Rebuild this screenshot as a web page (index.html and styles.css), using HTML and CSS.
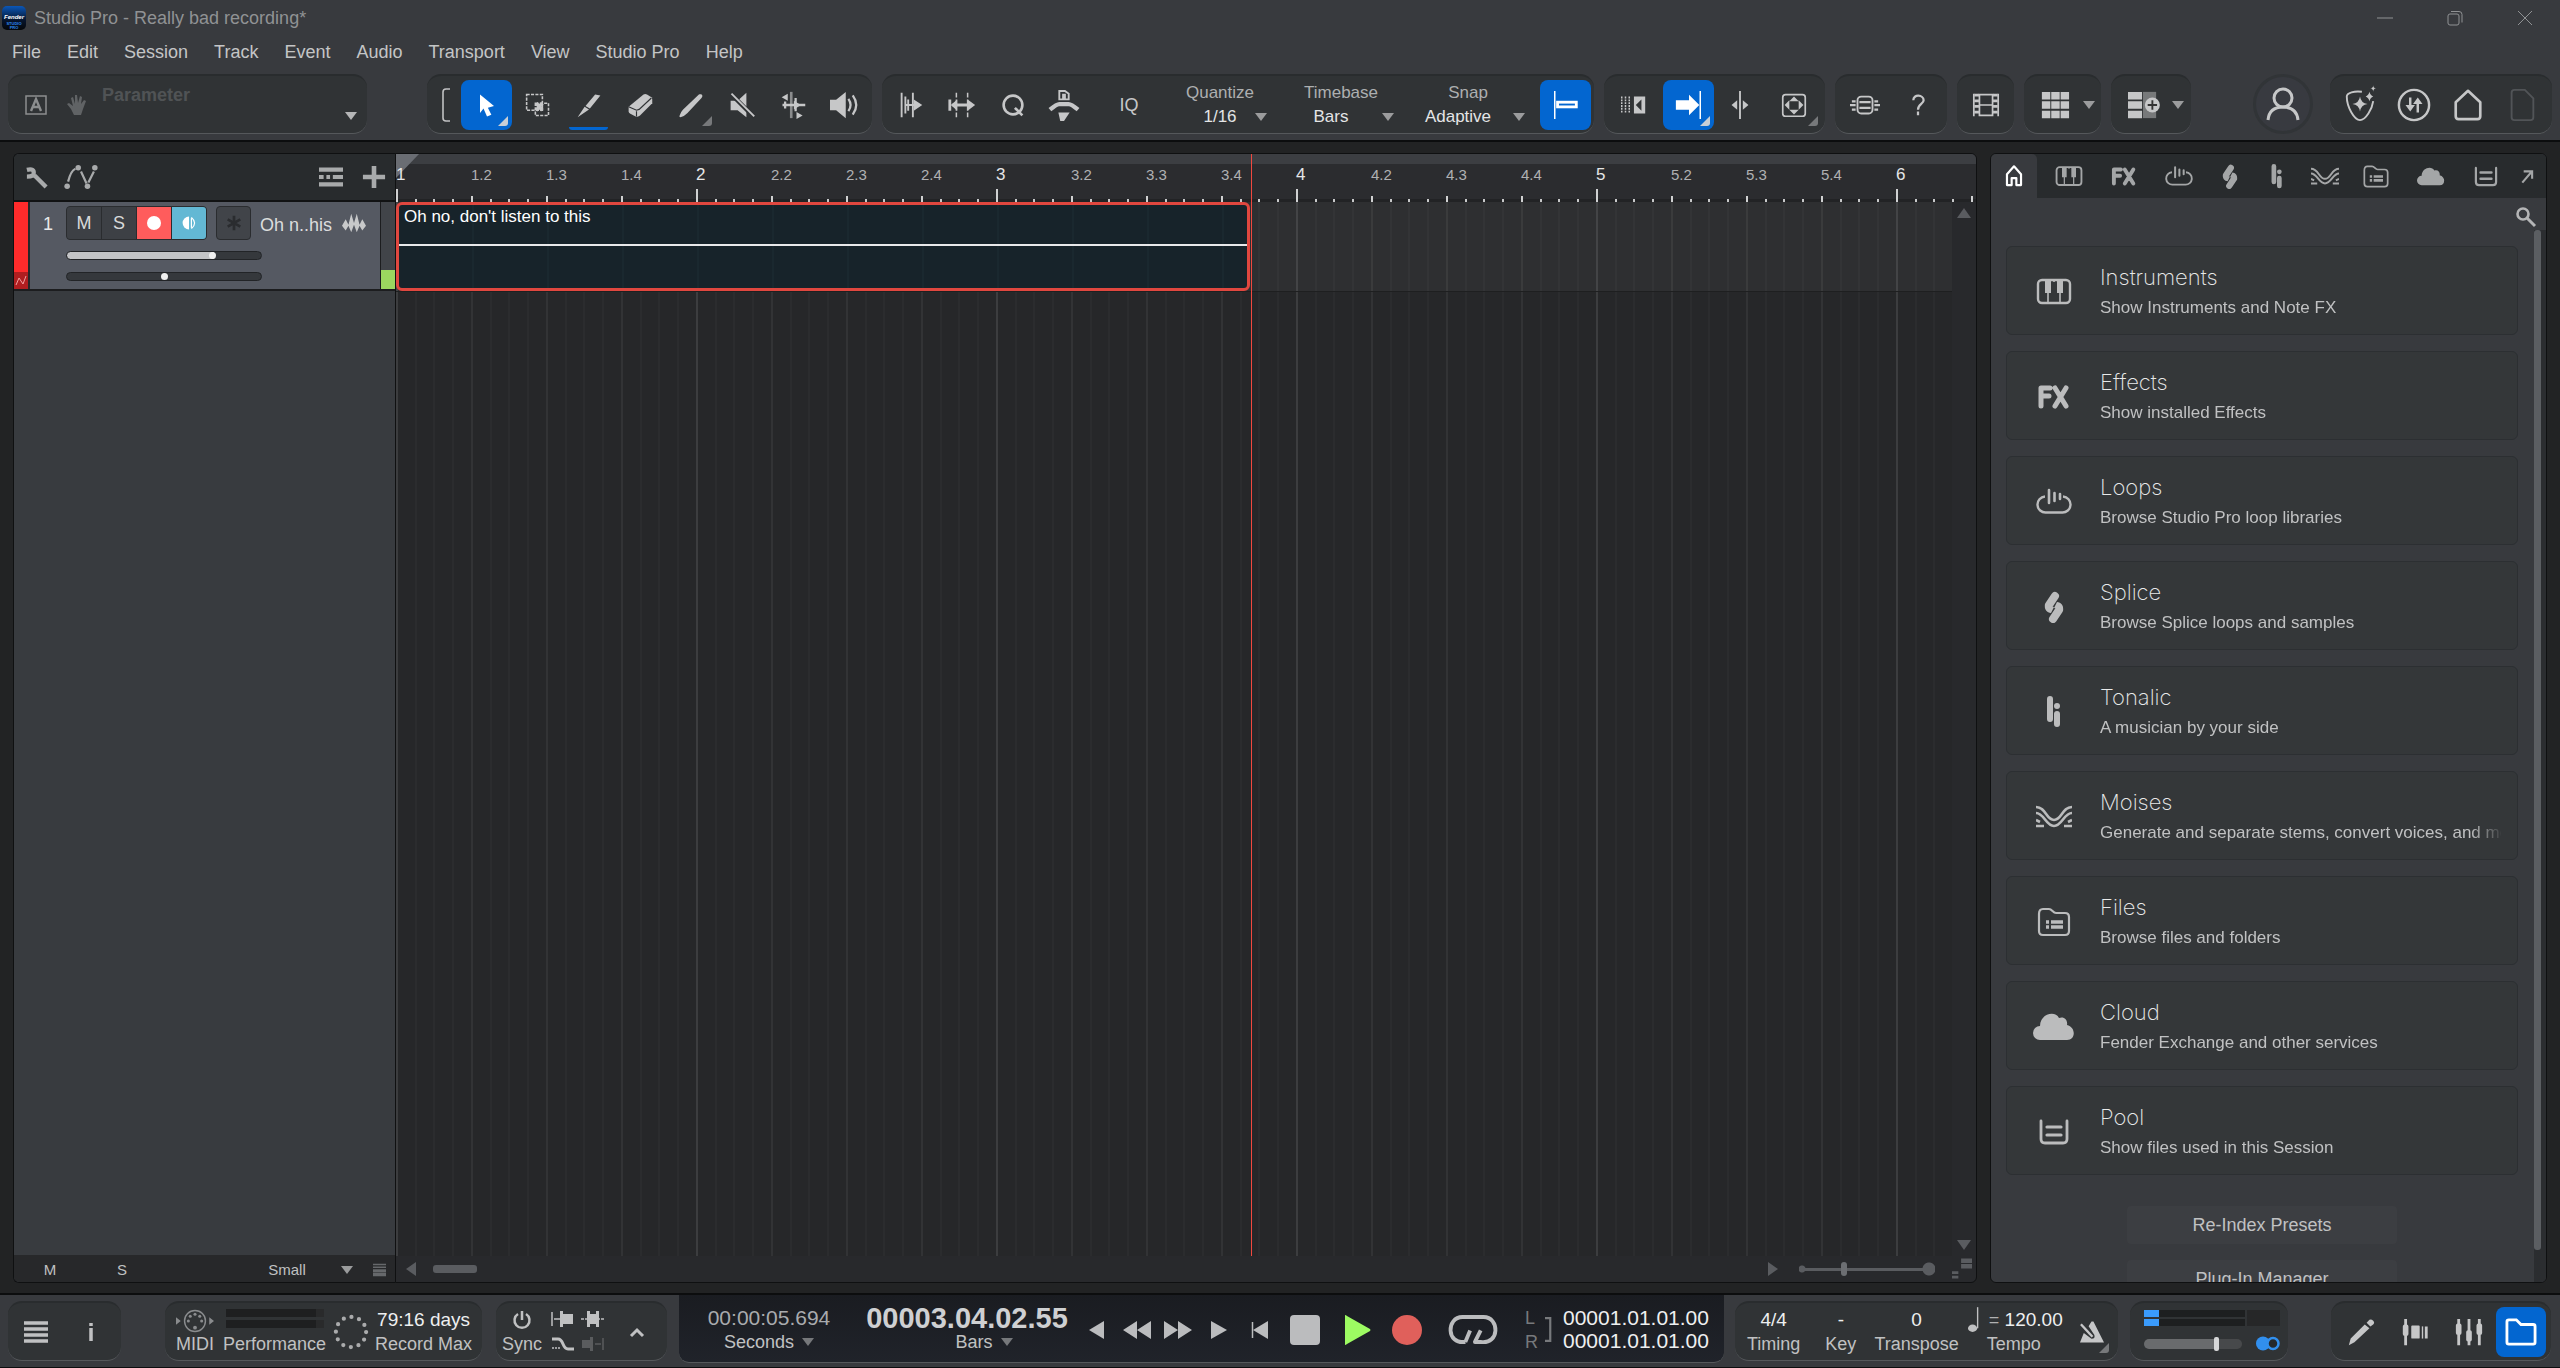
FILE: index.html
```html
<!DOCTYPE html>
<html lang="en">
<head>
  <meta charset="UTF-8">
  <title>Studio Pro - Really bad recording*</title>
  <link rel="stylesheet" href="styles.css">
</head>
<body>

  <!-- icon sprite -->
  <svg class="sprite" width="0" height="0">
    <symbol id="i-home" viewBox="0 0 32 32"><path d="M7 27V13l9-10 9 10v14h-6v-9h-6v9z" fill="none" stroke="currentColor" stroke-width="2.8" stroke-linejoin="round"/></symbol>
    <symbol id="i-keys" viewBox="0 0 36 32"><rect x="2" y="4" width="32" height="23" rx="4" fill="none" stroke="currentColor" stroke-width="2.4"/><path d="M9 4h6v13H9zM21 4h6v13h-6z" fill="currentColor"/><path d="M12 16v11M24 16v11M18 4v2" stroke="currentColor" stroke-width="1.6"/></symbol>
    <symbol id="i-fx" viewBox="0 0 36 32"><path d="M5 25V7h9M5 15h8M19 7l11 18M30 7L19 25" fill="none" stroke="currentColor" stroke-width="5" stroke-linecap="round" stroke-linejoin="round"/></symbol>
    <symbol id="i-loop" viewBox="0 0 36 32"><path d="M9 10.500a8 8 0 0 0 1 16h16a8 8 0 0 0 1-16" fill="none" stroke="currentColor" stroke-width="2.400"/><path d="M13 4v13M18.500 7v8M24 8v5" stroke="currentColor" stroke-width="2.600" stroke-linecap="round"/></symbol>
    <symbol id="i-splice" viewBox="0 0 32 32"><path d="M11 14l6-9M15 28l6-9" stroke="currentColor" stroke-width="8" stroke-linecap="round"/><path d="M7 14c-1 4 2 8 6 8l3-6zM25 19c1-4-2-8-6-8l-3 6z" fill="currentColor"/></symbol>
    <symbol id="i-tonalic" viewBox="0 0 32 32"><path d="M12 3v20M19 18v10" stroke="currentColor" stroke-width="6" stroke-linecap="round"/><circle cx="19" cy="10" r="3" fill="currentColor"/></symbol>
    <symbol id="i-moises" viewBox="0 0 36 32"><path d="M0 6c10 0 10 13 18 13S26 6 36 6M0 12c8 0 10 13 18 13s10-13 18-13M0 19l4 2M32 21l4-2M0 25h8M28 25h8" fill="none" stroke="currentColor" stroke-width="2.600"/></symbol>
    <symbol id="i-files" viewBox="0 0 36 32"><path d="M3 8c0-3 1-5 4-5h6c3 0 4 4 7 4h9c3 0 4 2 4 4v14c0 3-1 4-4 4H7c-3 0-4-1-4-4z" fill="none" stroke="currentColor" stroke-width="2.200"/><path d="M10 16h3M15 16h12M10 21h3M15 21h12" stroke="currentColor" stroke-width="3.400"/></symbol>
    <symbol id="i-cloud" viewBox="0 0 42 32"><path d="M7 29a7 7 0 0 1 0-14C7 3 22-1 26 7c5-2 9 2 8 7 9 2 9 15 0 15z" fill="currentColor"/></symbol>
    <symbol id="i-pool" viewBox="0 0 36 32"><path d="M5 5v18q0 4 4 4h18q4 0 4-4V5" fill="none" stroke="currentColor" stroke-width="2.800" stroke-linecap="round"/><path d="M11 11h14M11 19h14" stroke="currentColor" stroke-width="3.200" stroke-linecap="round"/></symbol>
    <symbol id="i-down" viewBox="0 0 12 10"><path d="M0 1h12L6 9z" fill="currentColor"/></symbol>
    <symbol id="i-corner" viewBox="0 0 12 12"><path d="M11 1v7a3 3 0 0 1-3 3H1z" fill="currentColor"/></symbol>
  </svg>

  <div class="titlebar">
    <svg class="app-icon" viewBox="0 0 24 24">
      <defs><linearGradient id="app" x2="0" y2="1"><stop offset="0" stop-color="#0b57b8"/><stop offset=".6" stop-color="#06142c"/><stop offset="1" stop-color="#050608"/></linearGradient></defs>
      <rect width="24" height="24" rx="5" fill="url(#app)"/>
      <text x="12" y="13" class="app-name">Fender</text>
      <text x="12" y="19" class="app-sub">STUDIO</text>
      <text x="12" y="23" class="app-sub">PRO</text>
    </svg>
    <span class="title">Studio Pro - Really bad recording*</span>
    <div class="window-buttons">
      <button aria-label="Minimize"><svg viewBox="0 0 16 16"><path d="M0 8h16" stroke="currentColor"/></svg></button>
      <button aria-label="Restore"><svg viewBox="0 0 16 16"><rect x="1" y="4" width="11" height="11" rx="2" fill="none" stroke="currentColor"/><path d="M4 1.500h8q3 0 3 3v8" fill="none" stroke="currentColor"/></svg></button>
      <button aria-label="Close"><svg viewBox="0 0 16 16"><path d="M1 1l14 14M15 1L1 15" stroke="currentColor"/></svg></button>
    </div>
  </div>

  <nav class="menubar">
    <a href="#">File</a>
    <a href="#">Edit</a>
    <a href="#">Session</a>
    <a href="#">Track</a>
    <a href="#">Event</a>
    <a href="#">Audio</a>
    <a href="#">Transport</a>
    <a href="#">View</a>
    <a href="#">Studio Pro</a>
    <a href="#">Help</a>
  </nav>

  <div class="toolbar">
    <div class="group param">
      <svg class="param-a" viewBox="0 0 22 20"><rect x="1" y="1" width="20" height="18" fill="none" stroke="currentColor" stroke-width="1.500"/><path d="M6 16l5-12 5 12M8 12h6" fill="none" stroke="currentColor" stroke-width="2.400"/></svg>
      <svg class="param-hand" viewBox="0 0 22 22"><path d="M7 21l-3-6-4-5 2-1 4 3-2-8 2-1 2 7V1h2l1 8 2-7 2 1-1 7 3-4 2 1-3 8-2 6z" fill="currentColor"/></svg>
      <span class="param-name">Parameter</span>
      <button class="param-menu" aria-label="Parameter list"><svg class="arrow" viewBox="0 0 12 10"><use href="#i-down"/></svg></button>
    </div>

    <div class="group tools">
      <svg class="bracket" viewBox="0 0 16 36"><path d="M13 2H9q-3 0-3 3v26q0 3 3 3h4" fill="none" stroke="currentColor" stroke-width="1.600"/></svg>
      <button class="tool active" aria-label="Arrow tool"><svg viewBox="0 0 32 32"><path d="M8 4l16 13-7 2 4 8-5 2-4-9-4 5z" fill="currentColor"/></svg><svg class="corner" viewBox="0 0 12 12"><use href="#i-corner"/></svg></button>
      <button class="tool" aria-label="Range tool"><svg viewBox="0 0 32 32"><path d="M3 4h18v18H3zM13 14h15v14H13z" fill="none" stroke="currentColor" stroke-width="1.800" stroke-dasharray="3.500 1.500"/><path d="M14 14l7 8M21 14l-7 8" stroke="currentColor" stroke-width="4"/></svg></button>
      <button class="tool marked" aria-label="Split tool"><svg viewBox="0 0 32 32"><path d="M23 4l6 1-12 15-5-3zM11 18l5 3-13 9z" fill="currentColor"/></svg></button>
      <button class="tool" aria-label="Eraser tool"><svg viewBox="0 0 32 32"><path d="M20 4q2-1 4 0l5 3q1 1 1 3v4L16 28q-2 2-5 1l-6-3q-2-1-2-3v-5z" fill="currentColor"/><path d="M3 18l9 4 3-1L29 8M12 23v6" fill="none" stroke="#2f3234" stroke-width="1.300"/></svg></button>
      <button class="tool" aria-label="Paint tool"><svg viewBox="0 0 32 32"><path d="M25 4c4-1 5 2 3 4L12 25q-4 4-8 5-2 0-1-2 1-4 4-7z" fill="currentColor"/></svg><svg class="corner dim" viewBox="0 0 12 12"><use href="#i-corner"/></svg></button>
      <button class="tool" aria-label="Mute tool"><svg viewBox="0 0 32 32"><path d="M3 11h8l10-9v28l-10-8H3z" fill="currentColor"/><path d="M4 4l26 26" stroke="#2f3234" stroke-width="5"/><path d="M4 3l26 26" stroke="currentColor" stroke-width="2.200"/></svg></button>
      <button class="tool" aria-label="Bend tool"><svg viewBox="0 0 32 32"><path d="M14 1v30" stroke="currentColor" stroke-width="3" opacity=".6"/><path d="M4 16h26M19 8v15M7 12v8" stroke="currentColor" stroke-width="2.600"/><path d="M17 11l8 5-8 5zM10 3v8L3 7zM20 24v8l7-4z" fill="currentColor"/></svg></button>
      <button class="tool" aria-label="Listen tool"><svg viewBox="0 0 32 32"><path d="M0 10h7l11-9v30L7 22H0z" fill="currentColor"/><path d="M21 9q5 7 0 14M26 5q8 11 0 22" fill="none" stroke="currentColor" stroke-width="2.600"/></svg></button>
    </div>

    <div class="group snap">
      <button class="tool" aria-label="Quantize start"><svg viewBox="0 0 32 32"><path d="M6 3v26M10 7v18M13 10v12M18 3v26" stroke="currentColor" stroke-width="2"/><path d="M10 15h9v-5l9 6-9 6v-5h-9z" fill="currentColor"/></svg></button>
      <button class="tool" aria-label="Quantize length"><svg viewBox="0 0 32 32"><path d="M10 3v26M22 3v26" stroke="currentColor" stroke-width="1.600" stroke-dasharray="5 2"/><path d="M3 10v12M6 16h20" stroke="currentColor" stroke-width="3"/><path d="M4 16l7-6v12zM30 16l-8-6v12z" fill="currentColor"/></svg></button>
      <button class="tool" aria-label="Quantize"><svg viewBox="0 0 32 32"><circle cx="16" cy="16" r="10" fill="none" stroke="currentColor" stroke-width="2.800"/><path d="M18 19l8 8" stroke="currentColor" stroke-width="2.800"/></svg></button>
      <button class="tool" aria-label="Humanize"><svg viewBox="0 0 32 32"><path d="M11 10V1h6l4 3v6h-4V5h-2v5z" fill="none" stroke="currentColor" stroke-width="2"/><path d="M1 21q7-6 10-6h10q3 0 10 6" fill="none" stroke="currentColor" stroke-width="4.500"/><path d="M10 24h12l-6 9h-4z" fill="currentColor"/></svg></button>
      <button class="tool iq">IQ</button>
      <div class="field quantize">
        <label for="quantize">Quantize</label>
        <select id="quantize"><option>1/16</option></select>
        <svg class="arrow" viewBox="0 0 12 10"><use href="#i-down"/></svg>
      </div>
      <div class="field timebase">
        <label for="timebase">Timebase</label>
        <select id="timebase"><option>Bars</option></select>
        <svg class="arrow" viewBox="0 0 12 10"><use href="#i-down"/></svg>
      </div>
      <div class="field snapmode">
        <label for="snapmode">Snap</label>
        <select id="snapmode"><option>Adaptive</option></select>
        <svg class="arrow" viewBox="0 0 12 10"><use href="#i-down"/></svg>
      </div>
      <button class="tool active" aria-label="Snap"><svg viewBox="0 0 32 32"><path d="M4 1v30" stroke="currentColor" stroke-width="1.600"/><rect x="7" y="13" width="20" height="5" fill="none" stroke="currentColor" stroke-width="3"/></svg></button>
    </div>

    <div class="group scroll">
      <button class="tool" aria-label="Autoscroll mode"><svg viewBox="0 0 32 32"><path d="M4 7v18M8 7v18M12 7v18" stroke="currentColor" stroke-width="1.600" stroke-dasharray="2 1"/><path d="M17 7h12v18H17zM25 10l-6 6 6 6z" fill="currentColor" fill-rule="evenodd"/></svg></button>
      <button class="tool active" aria-label="Autoscroll"><svg viewBox="0 0 32 32"><path d="M2 11h14V5l11 11-11 11v-6H2z" fill="currentColor"/><path d="M28 1v30" stroke="currentColor" stroke-width="1.600"/></svg><svg class="corner" viewBox="0 0 12 12"><use href="#i-corner"/></svg></button>
      <button class="tool" aria-label="Cursor follows"><svg viewBox="0 0 32 32"><path d="M16 1v30" stroke="currentColor" stroke-width="2"/><path d="M13 11v10l-6-5zM19 11v10l6-5z" fill="currentColor"/></svg></button>
      <button class="tool ripple" aria-label="Ripple edit"><svg viewBox="0 0 32 32"><rect x="4" y="5" width="24" height="23" rx="3" fill="none" stroke="currentColor" stroke-width="1.800"/><path d="M16 7l5 5H11zM16 26l5-5H11zM6 16l5-5v10zM26 16l-5-5v10z" fill="currentColor"/></svg><svg class="corner dim" viewBox="0 0 12 12"><use href="#i-corner"/></svg></button>
    </div>

    <div class="group">
      <button class="tool macros" aria-label="Macros"><svg viewBox="0 0 32 32"><rect x="8" y="7" width="16" height="18" rx="4" fill="none" stroke="currentColor" stroke-width="2"/><path d="M10 13h12M10 19h12M2 12h4M0 16h6M2 21h4M26 12h4M26 16h6M26 21h4" stroke="currentColor" stroke-width="2.400"/></svg></button>
      <button class="tool macros" aria-label="Help"><svg viewBox="0 0 32 32"><path d="M11 11c0-7 11-6 11 0 0 4-6 4-6 10M16 23v4" fill="none" stroke="currentColor" stroke-width="2.400"/></svg></button>
    </div>

    <div class="group">
      <button class="tool" aria-label="Video"><svg viewBox="0 0 32 32"><path d="M3 4v24M9 4v24M23 4v24M29 4v24M9 5h14M9 16h14M9 27h14" stroke="currentColor" stroke-width="1.800"/><path d="M6 4v24M26 4v24" stroke="currentColor" stroke-width="5" stroke-dasharray="3 3"/></svg></button>
    </div>

    <div class="group grid-view">
      <button class="tool" aria-label="Grid view"><svg viewBox="0 0 32 32"><path d="M2 2h9v8H2zM12 2h9v8h-9zM22 2h9v8h-9zM2 12h9v8H2zM12 12h9v8h-9zM22 12h9v8h-9zM2 22h9v8H2zM12 22h9v8h-9zM22 22h9v8h-9z" fill="currentColor"/></svg></button>
      <svg class="arrow" viewBox="0 0 12 10"><use href="#i-down"/></svg>
    </div>

    <div class="group add-view">
      <button class="tool" aria-label="Add view"><svg viewBox="0 0 32 32"><path d="M16 2h14v28H16z" fill="#77797a"/><path d="M0 2h15v8H0zM0 12h15v8H0zM0 22h15v8H0z" fill="currentColor"/><circle cx="26" cy="16" r="8" fill="currentColor"/><path d="M21 16h10M26 11v10" stroke="#333" stroke-width="2"/></svg></button>
      <svg class="arrow" viewBox="0 0 12 10"><use href="#i-down"/></svg>
    </div>

    <button class="user" aria-label="Account"><svg viewBox="0 0 34 34"><circle cx="17" cy="11" r="9" fill="none" stroke="currentColor" stroke-width="3"/><path d="M2 33c1-10 8-13 15-13s14 3 15 13" fill="none" stroke="currentColor" stroke-width="3"/></svg></button>

    <div class="group pages">
      <button class="page" aria-label="Start"><svg viewBox="0 0 36 36"><path d="M20 4c-8-1-16 1-16 5 0 11 8 25 14 25s13-12 14-20" fill="none" stroke="currentColor" stroke-width="2"/><path d="M18 9q1 7 8 8-7 1-8 8-1-7-8-8 7-1 8-8zM28 4q1 4 4 5-3 1-4 5-1-4-4-5 3-1 4-5zM32-3q0 3 3 3-3 1-3 4 0-3-3-4 3 0 3-3z" fill="currentColor"/></svg></button>
      <button class="page" aria-label="Downloads"><svg viewBox="0 0 36 36"><circle cx="18" cy="18" r="16" fill="none" stroke="currentColor" stroke-width="2.600"/><path d="M14 10v10M22 26V15" stroke="currentColor" stroke-width="2.600"/><path d="M9 18h10l-5 7zM17 17h10l-5-7z" fill="currentColor"/></svg></button>
      <button class="page" aria-label="Home"><svg viewBox="0 0 36 36"><path d="M5 15L18 3l13 12v15q0 3-3 3H8q-3 0-3-3z" fill="none" stroke="currentColor" stroke-width="2.800" stroke-linejoin="round"/></svg></button>
      <button class="page dim" aria-label="Document"><svg viewBox="0 0 36 36"><path d="M7 5q0-3 3-3h11l9 9v20q0 3-3 3H10q-3 0-3-3z" fill="none" stroke="currentColor" stroke-width="2"/></svg></button>
    </div>
  </div>

  <main class="workspace">
    <section class="tracks">
      <div class="tracks-head">
        <svg class="i-wrench" viewBox="0 0 24 24"><path d="M2 4q8-2 7 4 0 3-7 3M10 10l12 12" fill="none" stroke="currentColor" stroke-width="4.500"/></svg>
        <svg class="i-auto" viewBox="0 0 36 26"><path d="M4 18Q7 6 12 4M18 7l6 13M26 19l6-12" fill="none" stroke="currentColor" stroke-width="2.400"/><g fill="currentColor"><circle cx="3" cy="23" r="3"/><circle cx="15" cy="3" r="3"/><circle cx="25" cy="23" r="3"/><circle cx="33" cy="3" r="3"/></g></svg>
        <button class="icon-btn list" aria-label="Track list"><svg viewBox="0 0 26 22"><path d="M0 3h26M0 19h26M0 11h5M8 11h4M15 11h11" stroke="currentColor" stroke-width="4.500"/></svg></button>
        <button class="icon-btn" aria-label="Add track"><svg viewBox="0 0 26 26"><path d="M13 1v24M1 13h24" stroke="currentColor" stroke-width="5"/></svg></button>
      </div>

      <div class="track">
        <div class="track-color"><svg viewBox="0 0 12 12"><path d="M1 10L4 3l4 6 3-8" fill="none" stroke="currentColor"/></svg></div>
        <span class="track-no">1</span>
        <div class="track-body">
          <div class="track-row">
            <div class="buttons">
              <button>M</button>
              <button>S</button>
              <button class="rec" aria-label="Record"><i></i></button>
              <button class="mon" aria-label="Monitor"><svg viewBox="0 0 20 20"><path d="M10 2v16a8 8 0 0 1 0-16z" fill="currentColor"/><path d="M13 4v12M13 3q8 7 0 14" fill="none" stroke="currentColor" stroke-width="1.500"/></svg></button>
            </div>
            <button class="star" aria-label="Input"><svg viewBox="0 0 20 20"><path d="M10 2v16M3 6l14 8M3 14l14-8" stroke="currentColor" stroke-width="3"/></svg></button>
            <span class="track-name">Oh n..his</span>
            <svg class="wave" viewBox="0 0 26 20"><path d="M0 13l4-7 3 6 3-12 3 10 3-10 3 12 3-6 4 7-4 5-3-5-3 7-3-8-3 8-3-7-3 5z" fill="currentColor"/></svg>
          </div>
          <input class="slider volume" type="range" min="0" max="100" value="76" aria-label="Volume">
          <input class="slider pan" type="range" min="0" max="100" value="50" aria-label="Pan">
        </div>
        <div class="meter"><i></i></div>
      </div>

      <div class="tracks-foot">
        <button>M</button>
        <button>S</button>
        <select aria-label="Track height"><option>Small</option></select>
        <svg class="arrow" viewBox="0 0 12 10"><use href="#i-down"/></svg>
        <svg class="foot-list" viewBox="0 0 14 14"><path d="M0 1h14M0 4h14" stroke="currentColor" stroke-width="1.500"/><path d="M0 8h14M0 12h14" stroke="currentColor" stroke-width="3.500"/></svg>
      </div>
    </section>

    <section class="arranger">
      <div class="ruler" id="ruler">
        <div class="range"><i></i></div>
      </div>
      <div class="canvas">
        <div class="lane">
          <div class="event">Oh no, don't listen to this</div>
        </div>
        <div class="vscroll">
          <svg viewBox="0 0 14 10"><path d="M7 0l7 10H0z" fill="currentColor"/></svg>
          <svg viewBox="0 0 14 10"><path d="M0 0h14L7 10z" fill="currentColor"/></svg>
        </div>
      </div>
      <div class="hscroll">
        <svg class="side" viewBox="0 0 10 14"><path d="M10 0v14L0 7z" fill="currentColor"/></svg>
        <i class="thumb"></i>
        <svg class="side" viewBox="0 0 10 14"><path d="M0 0l10 7-10 7z" fill="currentColor"/></svg>
        <input class="zoom" type="range" min="0" max="100" value="32" aria-label="Zoom">
        <svg class="zoom-icon" viewBox="0 0 22 22"><path d="M10 2h12M10 8h12" stroke="currentColor" stroke-width="5"/><path d="M0 15h7M0 20h7" stroke="currentColor" stroke-width="3"/></svg>
      </div>
      <div class="playhead"></div>
    </section>

    <aside class="browser">
      <div class="tabs">
        <button class="tab current" aria-label="Home"><svg viewBox="0 0 32 32"><use href="#i-home"/></svg></button>
        <button class="tab" aria-label="Instruments"><svg viewBox="0 0 36 32"><use href="#i-keys"/></svg></button>
        <button class="tab" aria-label="Effects"><svg viewBox="0 0 36 32"><use href="#i-fx"/></svg></button>
        <button class="tab" aria-label="Loops"><svg viewBox="0 0 36 32"><use href="#i-loop"/></svg></button>
        <button class="tab narrow" aria-label="Splice"><svg viewBox="0 0 32 32"><use href="#i-splice"/></svg></button>
        <button class="tab narrow" aria-label="Tonalic"><svg viewBox="0 0 32 32"><use href="#i-tonalic"/></svg></button>
        <button class="tab narrow" aria-label="Moises"><svg viewBox="0 0 36 32"><use href="#i-moises"/></svg></button>
        <button class="tab" aria-label="Files"><svg viewBox="0 0 36 32"><use href="#i-files"/></svg></button>
        <button class="tab" aria-label="Cloud"><svg viewBox="0 0 42 32"><use href="#i-cloud"/></svg></button>
        <button class="tab" aria-label="Pool"><svg viewBox="0 0 36 32"><use href="#i-pool"/></svg></button>
        <button class="tab last" aria-label="Detach"><svg viewBox="0 0 32 32"><path d="M7 29L26 7M10 5h18v16" fill="none" stroke="currentColor" stroke-width="4.500"/></svg></button>
      </div>
      <div class="search"><button class="icon-btn" aria-label="Search"><svg viewBox="0 0 20 20"><circle cx="7" cy="7" r="5.500" fill="none" stroke="currentColor" stroke-width="2.600"/><path d="M11 11l8 8" stroke="currentColor" stroke-width="3"/></svg></button></div>
      <div class="browser-body">
        <div class="cards">
          <button class="card"><svg viewBox="0 0 36 32"><use href="#i-keys"/></svg><span class="card-title">Instruments</span><span class="card-text">Show Instruments and Note FX</span></button>
          <button class="card"><svg viewBox="0 0 36 32"><use href="#i-fx"/></svg><span class="card-title">Effects</span><span class="card-text">Show installed Effects</span></button>
          <button class="card"><svg viewBox="0 0 36 32"><use href="#i-loop"/></svg><span class="card-title">Loops</span><span class="card-text">Browse Studio Pro loop libraries</span></button>
          <button class="card"><svg viewBox="0 0 32 32"><use href="#i-splice"/></svg><span class="card-title">Splice</span><span class="card-text">Browse Splice loops and samples</span></button>
          <button class="card"><svg viewBox="0 0 32 32"><use href="#i-tonalic"/></svg><span class="card-title">Tonalic</span><span class="card-text">A musician by your side</span></button>
          <button class="card"><svg viewBox="0 0 36 32"><use href="#i-moises"/></svg><span class="card-title">Moises</span><span class="card-text">Generate and separate stems, convert voices, and more</span></button>
          <button class="card"><svg viewBox="0 0 36 32"><use href="#i-files"/></svg><span class="card-title">Files</span><span class="card-text">Browse files and folders</span></button>
          <button class="card"><svg class="big" viewBox="0 0 42 32"><use href="#i-cloud"/></svg><span class="card-title">Cloud</span><span class="card-text">Fender Exchange and other services</span></button>
          <button class="card"><svg viewBox="0 0 36 32"><use href="#i-pool"/></svg><span class="card-title">Pool</span><span class="card-text">Show files used in this Session</span></button>
          <button class="action first">Re-Index Presets</button>
          <button class="action">Plug-In Manager</button>
        </div>
        <div class="scrollbar"><i></i></div>
      </div>
    </aside>
  </main>

  <footer class="bottombar">
    <div class="group menu-group">
      <button aria-label="Menu"><svg viewBox="0 0 24 20"><path d="M0 1h24M0 7h24M0 13h24M0 19h24" stroke="currentColor" stroke-width="3.500"/></svg></button>
      <button aria-label="Info"><svg viewBox="0 0 24 20"><path d="M10 1v3M10 6v13" stroke="currentColor" stroke-width="3.500"/></svg></button>
    </div>

    <div class="group perf">
      <div class="stat midi">
        <svg viewBox="0 0 40 24"><path d="M0 8v8l5-4zM35 8v8l5-4z" fill="currentColor"/><circle cx="20" cy="12" r="11" fill="none" stroke="currentColor" stroke-width="1.500"/><g fill="currentColor"><circle cx="13" cy="12" r="1.600"/><circle cx="15" cy="7" r="1.600"/><circle cx="20" cy="5" r="1.600"/><circle cx="25" cy="7" r="1.600"/><circle cx="27" cy="12" r="1.600"/><circle cx="20" cy="19" r="2"/></g></svg>
        <span>MIDI</span>
      </div>
      <div class="stat load">
        <div class="bars"><i></i><i></i></div>
        <span>Performance</span>
      </div>
      <svg class="disk" viewBox="0 0 36 36"><circle cx="18" cy="18" r="16" fill="none" stroke="currentColor" stroke-width="4.500" stroke-linecap="round" stroke-dasharray="0 8.377"/></svg>
      <div class="stat record">
        <b>79:16 days</b>
        <span>Record Max</span>
      </div>
    </div>

    <div class="group sync">
      <div class="stat">
        <svg viewBox="0 0 20 20"><path d="M6 4a7.500 7.500 0 1 0 8 0M10 1v9" fill="none" stroke="currentColor" stroke-width="2.500"/></svg>
        <span>Sync</span>
      </div>
      <div class="sync-icons">
        <svg viewBox="0 0 24 16"><path d="M1 1v14M3 8h6" stroke="currentColor" stroke-width="1.500"/><path d="M9 0h3v3h10v10H12v3H9z" fill="currentColor"/></svg>
        <svg viewBox="0 0 24 16"><path d="M0 8h24" stroke="currentColor" stroke-width="1.500" stroke-dasharray="3 1"/><path d="M6 0h3v3h6V0h3v16h-3v-3H9v3H6z" fill="currentColor"/></svg>
        <svg viewBox="0 0 24 16"><path d="M1 3h6q3 0 5 5t5 5h6" fill="none" stroke="currentColor" stroke-width="3"/><path d="M1 12h8" stroke="currentColor" stroke-width="1.500" stroke-dasharray="2 1"/></svg>
        <svg class="off" viewBox="0 0 24 16"><path d="M1 4h8V1h3v14H9v-3H1z" fill="currentColor"/><path d="M14 8h6M22 2v12" stroke="currentColor" stroke-width="1.500"/></svg>
      </div>
      <button class="caret" aria-label="More"><svg viewBox="0 0 14 10"><path d="M1 9l6-6 6 6" fill="none" stroke="currentColor" stroke-width="3"/></svg></button>
    </div>

    <div class="transport">
      <div class="time">
        <span class="time-small">00:00:05.694</span>
        <span class="unit">Seconds <svg class="arrow" viewBox="0 0 12 10"><use href="#i-down"/></svg></span>
      </div>
      <div class="time main">
        <span class="time-big">00003.04.02.55</span>
        <span class="unit">Bars <svg class="arrow" viewBox="0 0 12 10"><use href="#i-down"/></svg></span>
      </div>
      <button class="t" aria-label="Step back"><svg viewBox="0 0 28 18"><path d="M22 0v18L7 9z" fill="currentColor"/></svg></button>
      <button class="t" aria-label="Rewind"><svg viewBox="0 0 28 18"><path d="M14 0v18L0 9zM28 0v18L14 9zM14 5v8" fill="currentColor"/></svg></button>
      <button class="t" aria-label="Forward"><svg viewBox="0 0 28 18"><path d="M0 0l14 9L0 18zM14 0l14 9-14 9z" fill="currentColor"/></svg></button>
      <button class="t" aria-label="Step forward"><svg viewBox="0 0 28 18"><path d="M6 0l16 9L6 18z" fill="currentColor"/></svg></button>
      <button class="t" aria-label="Return to zero"><svg viewBox="0 0 28 18"><path d="M22 0v18L7 9z" fill="currentColor"/><path d="M6.500 1v16" stroke="currentColor" stroke-width="1.500"/></svg></button>
      <button class="t stop" aria-label="Stop"><svg viewBox="0 0 30 30"><rect width="30" height="30" rx="4" fill="currentColor"/></svg></button>
      <button class="t play" aria-label="Play"><svg viewBox="0 0 30 30"><path d="M3 0q1 0 2 1l23 13q1 1 0 2L5 29q-1 1-2 1z" fill="currentColor"/></svg></button>
      <button class="t record" aria-label="Record"><svg viewBox="0 0 30 30"><circle cx="15" cy="15" r="15" fill="currentColor"/></svg></button>
      <button class="t cycle" aria-label="Loop"><svg viewBox="0 0 50 32"><path d="M17 29l5-12M17 29C-3 32-3 3 14 3h22c17 0 17 29-3 26h-6l6-12M17 29h-5" fill="none" stroke="currentColor" stroke-width="4" stroke-linejoin="round"/></svg></button>
      <div class="lr"><span>L</span><span>R</span></div>
      <svg class="lr-bracket" viewBox="0 0 8 28"><path d="M0 1h6v26H0" fill="none" stroke="currentColor" stroke-width="2.500"/></svg>
      <div class="locators"><span>00001.01.01.00</span><span>00001.01.01.00</span></div>
    </div>

    <div class="group timing">
      <div class="stat"><b>4/4</b><span>Timing</span></div>
      <div class="stat key"><b>-</b><span>Key</span></div>
      <div class="stat transpose"><b>0</b><span>Transpose</span></div>
      <svg class="note" viewBox="0 0 12 28"><ellipse cx="5" cy="23" rx="5" ry="4" fill="currentColor"/><path d="M10.500 0v23" stroke="currentColor" stroke-width="1.500"/></svg>
      <div class="stat tempo"><b><em>=</em> 120.00</b><span>Tempo</span></div>
      <button class="metronome" aria-label="Metronome"><svg viewBox="0 0 26 24"><path d="M10 6l3-5h2l11 22H1l4-10 8 6q4 0 3-4z" fill="currentColor"/><path d="M2 4l12 13" stroke="currentColor" stroke-width="2.500"/></svg><svg class="corner dim" viewBox="0 0 12 12"><use href="#i-corner"/></svg></button>
    </div>

    <div class="group output">
      <div class="levels"><div><i></i><i></i></div><span></span></div>
      <div class="out-row">
        <input class="out-vol" type="range" min="0" max="100" value="75" aria-label="Main volume">
        <svg viewBox="0 0 24 14"><circle cx="7" cy="7" r="7" fill="currentColor"/><circle cx="17" cy="7" r="5.500" fill="#25292d" stroke="currentColor" stroke-width="2.500"/></svg>
      </div>
    </div>

    <div class="group views">
      <button class="tool" aria-label="Edit"><svg viewBox="0 0 32 32"><path d="M20 8l5 4L9 27l-6 3 2-7zM22 6l3-3q2-1 4 1t0 4l-3 2z" fill="currentColor"/></svg></button>
      <button class="tool" aria-label="Inspector"><svg viewBox="0 0 32 32"><path d="M6 2v28M28 10v13" stroke="currentColor" stroke-width="3"/><rect x="3" y="8" width="6" height="12" rx="2" fill="currentColor"/><rect x="12" y="9" width="9" height="14" rx="1" fill="currentColor"/><path d="M24 10v13" stroke="currentColor" stroke-width="1.500"/></svg></button>
      <button class="tool" aria-label="Mix"><svg viewBox="0 0 32 32"><path d="M5 2v28M16 2v28M27 2v28" stroke="currentColor" stroke-width="3"/><rect x="2" y="7" width="6" height="12" rx="2" fill="currentColor"/><rect x="13" y="14" width="6" height="12" rx="2" fill="currentColor"/><rect x="24" y="7" width="6" height="12" rx="2" fill="currentColor"/></svg></button>
      <button class="tool active" aria-label="Browse"><svg viewBox="0 0 32 32"><path d="M1 5q0-2 2-2h8l5 5h13q2 0 2 2v17q0 2-2 2H3q-2 0-2-2z" fill="none" stroke="currentColor" stroke-width="3"/></svg></button>
    </div>
  </footer>

  <script>
    // beat labels: 1, 1.2, 1.3, 1.4, 2, ...
    const ruler = document.getElementById("ruler");
    for (let i = 0; i < 21; i++) {
      const bar = Math.floor(i / 4) + 1;
      const beat = i % 4 + 1;
      const el = document.createElement("span");
      el.className = beat === 1 ? "beat bar" : "beat";
      el.textContent = beat === 1 ? bar : `${bar}.${beat}`;
      ruler.appendChild(el);
    }
  </script>
</body>
</html>
```

FILE: styles.css
```css
* {
  box-sizing: border-box;
}

body {
  margin: 0;
  height: 100vh;
  display: flex;
  flex-direction: column;
  overflow: hidden;
  background: #383a3e;
  color: #c0c1c2;
  font-family: "Liberation Sans", Arial, sans-serif;
  font-size: 18px;
  line-height: 22px;
}

button, select, input {
  margin: 0;
  padding: 0;
  border: none;
  background: none;
  color: inherit;
  font: inherit;
}

select {
  appearance: none;
  text-align: center;
  text-align-last: center;
}

svg {
  display: block;
  flex: none;
  overflow: visible;
}

.sprite {
  position: absolute;
}

.arrow {
  width: 12px;
  height: 10px;
  color: #9b9c9d;
}

/* title and menus */

.titlebar {
  display: flex;
  align-items: center;
  height: 36px;
  padding-left: 2px;
  color: #909294;
}

.app-icon {
  width: 24px;
  height: 24px;
}

.app-name {
  fill: #fff;
  font: italic bold 6px "Liberation Sans", sans-serif;
  text-anchor: middle;
}

.app-sub {
  fill: #2d8cf0;
  font: bold 4px "Liberation Sans", sans-serif;
  text-anchor: middle;
}

.title {
  flex: 1;
  padding-left: 8px;
}

.window-buttons {
  display: flex;
}

.window-buttons button {
  width: 70px;
  height: 32px;
  display: flex;
  align-items: center;
  justify-content: center;
}

.window-buttons svg {
  width: 16px;
  height: 16px;
}

.menubar {
  display: flex;
  align-items: center;
  gap: 26px;
  height: 32px;
  padding-left: 12px;
}

.menubar a {
  color: #c4c5c6;
  text-decoration: none;
}

/* toolbar */

.toolbar {
  display: flex;
  gap: 10px;
  height: 74px;
  padding: 6px 8px;
  border-bottom: 2px solid #0c0d0e;
}

.group {
  display: flex;
  align-items: center;
  height: 60px;
  padding: 0 3px;
  border-radius: 14px;
  background: #303335;
  border-top: 2px solid #292c2e;
  border-bottom: 1px solid #55585b;
}

.param {
  width: 359px;
  margin-right: 50px;
  padding: 0 8px 0 17px;
}

.param-a {
  width: 22px;
  height: 20px;
  color: #8c8e8f;
}

.param-hand {
  width: 22px;
  height: 22px;
  margin-left: 20px;
  color: #606365;
}

.param-name {
  flex: 1;
  align-self: flex-start;
  padding: 8px 0 0 13px;
  color: #505355;
  font-weight: bold;
}

.param-menu {
  align-self: flex-end;
  margin-bottom: 12px;
}

.param-menu .arrow {
  width: 16px;
  color: #b5b6b7;
}

.bracket {
  width: 16px;
  height: 36px;
  margin: 0 8px 0 7px;
}

.tool {
  position: relative;
  width: 51px;
  height: 50px;
  display: flex;
  align-items: center;
  justify-content: center;
  border-radius: 8px;
  color: #c6c7c8;
}

.tool svg {
  width: 30px;
  height: 30px;
}

.tools .tool svg {
  width: 28px;
  height: 28px;
}

.tool.active {
  background: #0366d0;
  color: #fff;
}

.tool.marked::after {
  content: "";
  position: absolute;
  right: 6px;
  bottom: 0;
  left: 6px;
  height: 3px;
  border-radius: 0 0 4px 4px;
  background: #0366d0;
}

.tool .corner,
.tools .tool .corner,
.metronome .corner {
  position: absolute;
  right: 3px;
  bottom: 3px;
  width: 12px;
  height: 12px;
  color: #c8ced6;
}

.tool .corner.dim,
.tools .tool .corner.dim,
.metronome .corner.dim {
  color: #77797b;
}

.scroll .tool.active {
  margin-left: 5px;
}

.tool.ripple {
  width: 57px;
}

.tool.macros {
  width: 53px;
}

.tool.iq {
  width: 80px;
}

.field {
  display: grid;
  grid-template-columns: 1fr 20px;
  row-gap: 2px;
  align-items: center;
  justify-items: center;
  font-size: 17px;
}

.field label {
  grid-column: 1 / 3;
  color: #adafb0;
}

.field select {
  width: 100%;
  color: #e4e5e6;
}

.quantize {
  width: 102px;
}

.quantize select {
  padding-left: 20px;
}

.timebase {
  width: 114px;
  margin-left: 13px;
}

.snapmode {
  width: 122px;
  margin: 0 11px 0 9px;
}

.grid-view .tool {
  width: 56px;
}

.grid-view .arrow {
  margin-right: 3px;
}

.add-view .tool {
  width: 58px;
}

.add-view .arrow {
  margin-right: 4px;
}

.user {
  width: 60px;
  height: 60px;
  margin: 0 7px 0 auto;
  display: flex;
  align-items: center;
  justify-content: center;
  border-radius: 30px;
  border: 3px solid #313437;
  background: #383a40;
  color: #c6c7c8;
}

.user svg {
  width: 34px;
  height: 34px;
}

.page {
  width: 54px;
  display: flex;
  justify-content: center;
  color: #c6c7c8;
}

.page.dim {
  color: #515457;
}

.page svg {
  width: 34px;
  height: 34px;
}

/* workspace */

.workspace {
  flex: 1;
  min-height: 0;
  display: grid;
  grid-template-columns: 382px 1fr 557px;
  padding: 11px 13px 10px;
  background: #222324;
}

.tracks, .arranger, .browser {
  display: flex;
  flex-direction: column;
  min-height: 0;
  overflow: hidden;
  border: 1px solid #0f1011;
}

.tracks {
  background: #383b3f;
  border-right: none;
  border-radius: 6px 0 0 6px;
}

.tracks-head {
  display: flex;
  align-items: center;
  height: 48px;
  padding: 0 9px 0 11px;
  background: #282b2d;
  border-bottom: 2px solid #111213;
  color: #a8aaab;
}

.i-wrench {
  width: 23px;
  height: 23px;
}

.i-auto {
  width: 34px;
  height: 24px;
  margin-left: 16px;
}

.icon-btn svg {
  width: 24px;
  height: 24px;
}

.icon-btn.list {
  margin: 0 19px 0 auto;
}

.track {
  display: flex;
  height: 89px;
  background: #555962;
  border-bottom: 2px solid #1c1d1f;
}

.track-color {
  width: 16px;
  display: flex;
  align-items: flex-end;
  background: linear-gradient(#ff2b2b 70px, #b01e20 70px);
  border-right: 2px solid #26282a;
  color: #f0a0a0;
}

.track-color svg {
  width: 12px;
  height: 12px;
  margin: 0 1px 2px;
}

.track-no {
  width: 36px;
  padding-top: 11px;
  text-align: center;
  color: #e8e8e8;
}

.track-body {
  flex: 1;
}

.track-row {
  display: flex;
  align-items: center;
  height: 41px;
}

.buttons {
  display: grid;
  grid-template-columns: repeat(4, 1fr);
  gap: 1px;
  width: 141px;
  height: 34px;
  overflow: hidden;
  border: 1px solid #2a2c2f;
  border-radius: 4px;
  background: #2a2c2f;
}

.buttons button {
  display: flex;
  align-items: center;
  justify-content: center;
  background: #3d4045;
  color: #d8d9da;
}

.buttons .rec {
  background: #ff5c5c;
}

.rec i {
  width: 14px;
  height: 14px;
  border-radius: 7px;
  background: #fff;
}

.buttons .mon {
  background: #63b8d4;
  color: #fff;
}

.mon svg {
  width: 16px;
  height: 16px;
}

.star {
  width: 35px;
  height: 34px;
  margin: 0 9px;
  display: flex;
  align-items: center;
  justify-content: center;
  border: 1px solid #2a2c2f;
  border-radius: 4px;
  background: #414449;
  color: #2a2c2f;
}

.star svg {
  width: 18px;
  height: 18px;
}

.track-name {
  flex: 1;
  padding-top: 4px;
  white-space: nowrap;
  color: #dcdddd;
}

.wave {
  width: 24px;
  height: 20px;
  margin-right: 14px;
  color: #c8c9ca;
}

.slider {
  appearance: none;
  display: block;
  width: 196px;
  height: 9px;
  margin-top: 8px;
  border: 1px solid #222427;
  border-radius: 5px;
  background: #35383c;
}

.slider.volume {
  background: linear-gradient(90deg, #c3c4c6 76%, #35383c 76%);
}

.slider.pan {
  margin-top: 12px;
}

.slider::-webkit-slider-thumb {
  appearance: none;
  width: 7px;
  height: 7px;
  border-radius: 4px;
  background: #f0f0f0;
}

.meter {
  width: 15px;
  display: flex;
  align-items: flex-end;
  background: #414449;
  border-left: 1px solid #1c1d1f;
}

.meter i {
  width: 100%;
  height: 19px;
  background: #9bd75f;
}

.tracks-foot {
  display: flex;
  align-items: center;
  height: 27px;
  margin-top: auto;
  padding-top: 2px;
  background: #27282a;
  font-size: 15px;
}

.tracks-foot button {
  width: 72px;
  text-align: center;
}

.tracks-foot select {
  width: 80px;
  margin-left: 89px;
}

.tracks-foot .arrow {
  margin: 0 20px 0 14px;
}

.foot-list {
  width: 13px;
  height: 14px;
  color: #66686b;
}

/* arranger */

.arranger {
  position: relative;
  margin-right: 13px;
  background: #28292c;
  border-radius: 0 6px 6px 0;
}

.ruler {
  position: relative;
  display: grid;
  grid-auto-flow: column;
  grid-auto-columns: 75px;
  height: 48px;
  padding-top: 10px;
  overflow: hidden;
  background:
    linear-gradient(90deg, #d0d1d2 2px, transparent 2px) 0 100% / 300px 13px repeat-x,
    linear-gradient(90deg, #d0d1d2 2px, transparent 2px) 0 100% / 75px 6px repeat-x,
    linear-gradient(90deg, transparent 25%, #c8c9ca 25%, #c8c9ca calc(25% + 2px), transparent calc(25% + 2px), transparent 50%, #c8c9ca 50%, #c8c9ca calc(50% + 2px), transparent calc(50% + 2px), transparent 75%, #c8c9ca 75%, #c8c9ca calc(75% + 2px), transparent calc(75% + 2px)) 0 100% / 75px 3px repeat-x,
    linear-gradient(#3c3e42 10px, #2b2c2f 10px, #2b2c2f 45px, #222325 45px);
}

.range {
  position: absolute;
  top: 0;
  left: 0;
}

.range i {
  display: block;
  border-top: 24px solid #6a6d73;
  border-right: 23px solid transparent;
}

.beat {
  position: relative;
  color: #b0b1b3;
  font-size: 15px;
}

.beat.bar {
  color: #e6e6e7;
  font-size: 17px;
}

.canvas {
  position: relative;
  flex: 1;
  padding-right: 24px;
  background:
    linear-gradient(90deg, #3c3d3f 2px, transparent 2px) 0 0 / 300px 100%,
    linear-gradient(90deg, #323335 2px, transparent 2px) 0 0 / 75px 100%,
    linear-gradient(90deg, transparent 25%, #2b2c2e 25%, #2b2c2e calc(25% + 2px), transparent calc(25% + 2px), transparent 50%, #2b2c2e 50%, #2b2c2e calc(50% + 2px), transparent calc(50% + 2px), transparent 75%, #2b2c2e 75%, #2b2c2e calc(75% + 2px), transparent calc(75% + 2px)) 0 0 / 75px 100%,
    #262729;
}

.lane {
  height: 90px;
  background: rgba(255, 255, 255, 0.04);
  border-bottom: 1px solid #1e1f20;
}

.event {
  width: 854px;
  height: 89px;
  padding: 1px 5px;
  border: 3px solid #e0473f;
  border-radius: 6px;
  color: #fff;
  font-size: 17px;
  background:
    linear-gradient(#e8e9ea, #e8e9ea) 0 39px / 100% 2px no-repeat,
    repeating-linear-gradient(90deg, #17232a 0, #17232a 73px, #1a282f 73px, #1a282f 75px);
}

.vscroll {
  position: absolute;
  top: 0;
  right: 0;
  bottom: 0;
  width: 24px;
  display: flex;
  flex-direction: column;
  align-items: center;
  justify-content: space-between;
  padding: 6px 0;
  background: #28292c;
  color: #5a5c60;
}

.vscroll svg {
  width: 14px;
  height: 10px;
}

.hscroll {
  display: flex;
  align-items: center;
  height: 26px;
  padding: 0 4px 0 10px;
  color: #5a5c60;
}

.side {
  width: 10px;
  height: 14px;
}

.thumb {
  width: 44px;
  height: 8px;
  margin: 0 auto 0 17px;
  border-radius: 3px;
  background: #5a5c60;
}

.zoom {
  appearance: none;
  width: 136px;
  height: 14px;
  margin: 0 17px 0 21px;
  background:
    radial-gradient(circle at 130px 7px, #5a5c60 6px, transparent 7px),
    radial-gradient(circle at 3px 7px, #5a5c60 3px, transparent 4px),
    linear-gradient(transparent 6px, #5a5c60 6px, #5a5c60 9px, transparent 9px);
}

.zoom::-webkit-slider-thumb {
  appearance: none;
  width: 6px;
  height: 14px;
  border-radius: 3px;
  background: #6c6e72;
}

.zoom-icon {
  width: 20px;
  height: 20px;
}

.playhead {
  position: absolute;
  top: 0;
  bottom: 26px;
  left: 855px;
  width: 1px;
  background: #f0483f;
}

/* browser */

.browser {
  background: #383a3e;
  border-radius: 6px;
}

.tabs {
  display: flex;
  height: 44px;
  background: #282b2d;
  color: #a4a6a7;
}

.tab {
  flex: 1 1 55px;
  display: flex;
  align-items: center;
  justify-content: center;
}

.tab svg {
  width: 28px;
  height: 25px;
}

.tab.current {
  flex: none;
  width: 46px;
  margin-right: 4px;
  background: #383a3e;
  border-radius: 5px 5px 0 0;
  color: #fff;
}

.tab.narrow {
  flex-basis: 47px;
}

.tab.last {
  flex: none;
  width: 32px;
  padding-right: 6px;
}

.tab.last svg {
  width: 15px;
  height: 15px;
}

.search {
  display: flex;
  justify-content: flex-end;
  height: 32px;
  padding: 6px 10px 0 0;
  color: #b4b5b6;
}

.search svg {
  width: 20px;
  height: 20px;
}

.browser-body {
  flex: 1;
  min-height: 0;
  display: flex;
}

.cards {
  flex: 1;
  min-width: 0;
  display: flex;
  flex-direction: column;
  gap: 16px;
  padding: 16px 16px 0 15px;
  overflow: hidden;
}

.card {
  flex: none;
  display: grid;
  grid-template-columns: 93px 1fr;
  align-content: center;
  align-items: center;
  row-gap: 8px;
  height: 89px;
  padding: 2px 16px 0 0;
  border: 1px solid #2c2f32;
  border-radius: 6px;
  background: #343739;
  text-align: left;
}

.card svg {
  grid-row: 1 / 3;
  justify-self: center;
  width: 36px;
  height: 32px;
  color: #bbbcbd;
}

.card svg.big {
  width: 42px;
}

.card-title {
  color: #e8e9e9;
  font-family: Inter, "Liberation Sans", sans-serif;
  font-size: 22px;
  font-weight: 200;
  line-height: 24px;
}

.card-text {
  overflow: hidden;
  white-space: nowrap;
  font-size: 17px;
  mask-image: linear-gradient(90deg, #000 370px, transparent 404px);
}

.action {
  flex: none;
  align-self: center;
  width: 270px;
  height: 38px;
  border-radius: 4px;
  background: #3c3e42;
}

.action.first {
  margin-top: 15px;
}

.scrollbar {
  width: 12px;
  background: #2b2d30;
}

.scrollbar i {
  display: block;
  width: 7px;
  height: 97%;
  border-radius: 3px;
  background: #5b5e62;
}

/* bottom bar */

.bottombar {
  display: flex;
  align-items: flex-start;
  height: 75px;
  padding: 6px 9px 0 8px;
  border-top: 2px solid #0c0d0e;
  border-bottom: 1px solid #0c0d0e;
}

.bottombar .group {
  flex: none;
}

.menu-group {
  width: 113px;
  margin-right: 44px;
  padding: 0;
}

.menu-group button {
  flex: 1;
  display: flex;
  justify-content: center;
}

.menu-group svg {
  width: 24px;
  height: 20px;
}

.stat {
  display: flex;
  flex-direction: column;
  align-items: center;
  gap: 2px;
  white-space: nowrap;
}

.stat b {
  color: #eeeff0;
  font-size: 19px;
  font-weight: normal;
}

.stat em {
  font-size: 18px;
  font-style: normal;
  color: #b0b1b2;
}

.perf {
  width: 317px;
  margin-right: 14px;
  padding: 0 0 0 11px;
}

.midi svg {
  width: 38px;
  height: 24px;
  margin-bottom: -2px;
  color: #8a8c8e;
}

.load {
  margin-left: 9px;
}

.bars {
  display: grid;
  gap: 3px;
  width: 98px;
  height: 22px;
  padding: 0 0 3px;
}

.bars i {
  border-right: 8px solid #292a2b;
  background: #1e1f20;
}

.disk {
  width: 34px;
  height: 44px;
  margin: 0 7px 0 8px;
  color: #aaabac;
}

.sync {
  width: 171px;
  margin-right: 12px;
}

.sync .stat svg {
  width: 20px;
  height: 22px;
}

.sync .stat {
  width: 46px;
}

.sync-icons {
  display: grid;
  grid-template-columns: 24px 24px;
  gap: 9px 6px;
  margin-left: 6px;
}

.sync-icons svg {
  width: 24px;
  height: 16px;
}

.sync-icons .off {
  color: #5a5c5e;
}

.caret {
  margin-left: 25px;
}

.caret svg {
  width: 14px;
  height: 10px;
}

.transport {
  flex: 1;
  display: flex;
  align-items: center;
  align-self: stretch;
  margin: -6px 11px 4px 0;
  padding-top: 2px;
  background: linear-gradient(#1a1c21, #20232a);
  border-bottom: 1px solid #55585b;
  border-radius: 0 0 10px 10px;
}

.time {
  width: 180px;
  display: flex;
  flex-direction: column;
  align-items: center;
  gap: 2px;
}

.time.main {
  width: 216px;
}

.time-small {
  color: #a9abae;
  font-size: 21px;
}

.time-big {
  color: #cfd0d2;
  font-size: 29px;
  font-weight: bold;
}

.unit {
  display: flex;
  align-items: center;
  gap: 8px;
}

.unit .arrow {
  color: #76787b;
}

.main .unit {
  padding-left: 34px;
}

.t {
  width: 41px;
  display: flex;
  justify-content: center;
  color: #bbbcbe;
}

.t svg {
  width: 28px;
  height: 18px;
}

.t.stop {
  width: 50px;
}

.t.record {
  width: 46px;
  color: #e0605b;
}

.t.play {
  width: 54px;
  color: #9dfb62;
}

.t.cycle {
  width: 86px;
}

.stop svg, .play svg, .t.record svg {
  width: 30px;
  height: 30px;
}

.cycle svg {
  width: 48px;
  height: 31px;
}

.lr {
  display: grid;
  row-gap: 2px;
  margin-left: 9px;
  color: #77797c;
}

.lr-bracket {
  width: 7px;
  height: 27px;
  margin: 0 11px 0 7px;
  color: #77797c;
}

.locators {
  display: grid;
  row-gap: 1px;
  color: #eeeff0;
  font-size: 21px;
}

.timing {
  width: 383px;
  margin-right: 12px;
  padding: 0 0 0 12px;
}

.stat.key {
  margin-left: 25px;
}

.stat.transpose {
  margin-left: 18px;
}

.note {
  width: 11px;
  height: 28px;
  margin: -24px 8px 0 9px;
}

.tempo span {
  padding-right: 24px;
}

.metronome {
  position: relative;
  width: 42px;
  height: 50px;
  margin-left: 6px;
  display: flex;
  align-items: center;
  justify-content: center;
  color: #c6c7c8;
}

.metronome svg {
  width: 25px;
  height: 24px;
}

.output.group {
  width: 158px;
  margin-right: 43px;
  padding: 7px 8px 9px 14px;
  flex-direction: column;
  align-items: stretch;
  justify-content: space-between;
}

.levels {
  display: flex;
  gap: 2px;
  height: 16px;
}

.levels div {
  flex: 1;
  display: grid;
  gap: 2px;
}

.levels i {
  background: linear-gradient(90deg, #3a9bfc 15px, #1d1f20 15px);
}

.levels span {
  width: 33px;
  background: #262728;
}

.out-row {
  display: flex;
  align-items: center;
  justify-content: space-between;
}

.out-row svg {
  width: 24px;
  height: 15px;
  color: #318fee;
}

.out-vol {
  appearance: none;
  width: 98px;
  height: 10px;
  border-radius: 5px;
  background: linear-gradient(90deg, #696b6d 75%, #47494b 75%);
}

.out-vol::-webkit-slider-thumb {
  appearance: none;
  width: 5px;
  height: 14px;
  border-radius: 2px;
  background: #d6d7d8;
}

.views {
  width: 220px;
}

.views .tool {
  width: 54px;
}

.views .tool.active {
  width: 50px;
}
```
